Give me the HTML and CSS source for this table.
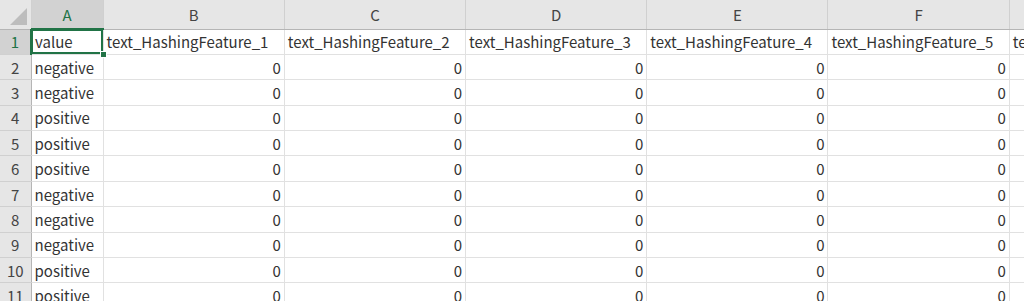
FILE: index.html
```html
<!DOCTYPE html>
<html lang="ja">
<head>
    <meta charset="UTF-8">
    <link rel="stylesheet" href="styles.css">
    <title>Sheet1</title>
</head>
<body>
    <table class="sheet">
        <colgroup>
            <col class="col-head">
            <col class="col-a">
            <col class="col-wide">
            <col class="col-wide">
            <col class="col-wide">
            <col class="col-wide">
            <col class="col-wide">
            <col class="col-wide">
        </colgroup>
        <thead>
            <tr class="letters">
                <th class="corner"><span class="tri"></span></th>
                <th class="active">A</th>
                <th>B</th>
                <th>C</th>
                <th>D</th>
                <th>E</th>
                <th>F</th>
                <th>G</th>
            </tr>
        </thead>
        <tbody>
            <tr>
                <th class="rownum active">1</th>
                <td class="selected">value</td>
                <td>text_HashingFeature_1</td>
                <td>text_HashingFeature_2</td>
                <td>text_HashingFeature_3</td>
                <td>text_HashingFeature_4</td>
                <td>text_HashingFeature_5</td>
                <td>text_HashingFeature_6</td>
            </tr>
            <tr><th class="rownum">2</th><td>negative</td><td class="num">0</td><td class="num">0</td><td class="num">0</td><td class="num">0</td><td class="num">0</td><td class="num">0</td></tr>
            <tr><th class="rownum">3</th><td>negative</td><td class="num">0</td><td class="num">0</td><td class="num">0</td><td class="num">0</td><td class="num">0</td><td class="num">0</td></tr>
            <tr><th class="rownum">4</th><td>positive</td><td class="num">0</td><td class="num">0</td><td class="num">0</td><td class="num">0</td><td class="num">0</td><td class="num">0</td></tr>
            <tr><th class="rownum">5</th><td>positive</td><td class="num">0</td><td class="num">0</td><td class="num">0</td><td class="num">0</td><td class="num">0</td><td class="num">0</td></tr>
            <tr><th class="rownum">6</th><td>positive</td><td class="num">0</td><td class="num">0</td><td class="num">0</td><td class="num">0</td><td class="num">0</td><td class="num">0</td></tr>
            <tr><th class="rownum">7</th><td>negative</td><td class="num">0</td><td class="num">0</td><td class="num">0</td><td class="num">0</td><td class="num">0</td><td class="num">0</td></tr>
            <tr><th class="rownum">8</th><td>negative</td><td class="num">0</td><td class="num">0</td><td class="num">0</td><td class="num">0</td><td class="num">0</td><td class="num">0</td></tr>
            <tr><th class="rownum">9</th><td>negative</td><td class="num">0</td><td class="num">0</td><td class="num">0</td><td class="num">0</td><td class="num">0</td><td class="num">0</td></tr>
            <tr><th class="rownum">10</th><td>positive</td><td class="num">0</td><td class="num">0</td><td class="num">0</td><td class="num">0</td><td class="num">0</td><td class="num">0</td></tr>
            <tr><th class="rownum">11</th><td>positive</td><td class="num">0</td><td class="num">0</td><td class="num">0</td><td class="num">0</td><td class="num">0</td><td class="num">0</td></tr>
        </tbody>
    </table>
</body>
</html>
```

FILE: styles.css
```css
html, body {
    margin: 0;
    padding: 0;
    overflow: hidden;
    background-color: #FFFFFF;
}

.sheet {
    table-layout: fixed;
    border-collapse: collapse;
    width: 1191px;

    font-family: "Noto Sans CJK JP", "Noto Sans", sans-serif;
    font-size: 15px;
    color: #333333;
}

.col-head { width: 31px; }
.col-a { width: 72px; }
.col-wide { width: 181px; }

th, td {
    padding: 0 3px;
    border-right: 1px solid #E1E1E1;
    border-bottom: 1px solid #E1E1E1;

    white-space: nowrap;
    overflow: hidden;
    line-height: 1;
}

/* headers */

.letters th {
    height: 28px;

    background-color: #E6E6E6;
    border-right: 1px solid #D0D0D0;
    border-bottom: 1px solid #B5B5B5;

    font-weight: normal;
    color: #444444;
    text-align: center;
}

.letters th.active {
    background-color: #D2D2D2;
    border-bottom: 2px solid #217346;
    color: #217346;
}

.corner {
    position: relative;
}

.tri {
    position: absolute;
    right: 4px;
    bottom: 4px;

    width: 0;
    height: 0;

    border-left: 17px solid transparent;
    border-bottom: 17px solid #BDBDBD;
}

.rownum {
    padding: 0;

    background-color: #E6E6E6;
    border-right: 1px solid #B5B5B5;
    border-bottom: 1px solid #D0D0D0;

    font-weight: normal;
    color: #444444;
    text-align: center;
}

.rownum.active {
    background-color: #D2D2D2;
    border-right: 2px solid #217346;
    color: #217346;
}

/* cells */

tbody tr {
    height: 25.4px;
}

td {
    text-align: left;
}

td.num {
    text-align: right;
}

td.selected {
    position: relative;
    overflow: visible;

    outline: 2px solid #217346;
    outline-offset: -2px;
}

td.selected::after {
    content: "";

    position: absolute;
    right: -4px;
    bottom: -4px;

    width: 5px;
    height: 5px;

    background-color: #217346;
    border: 1px solid #FFFFFF;
}
```
